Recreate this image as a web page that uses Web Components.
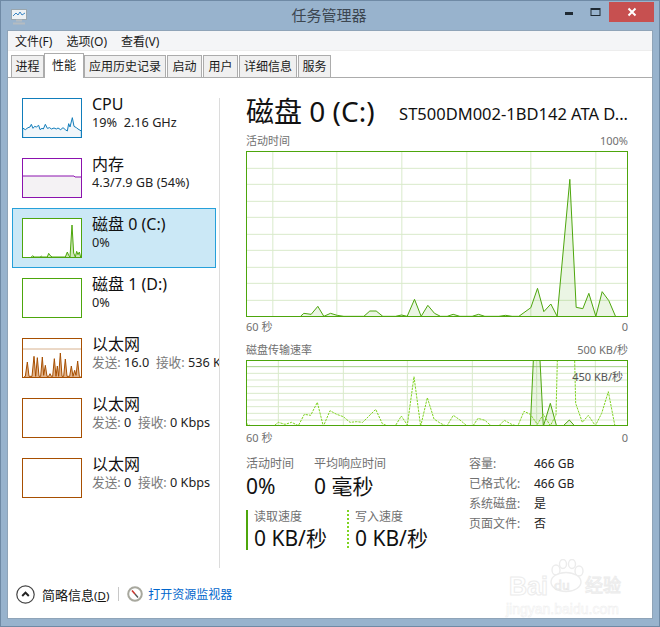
<!DOCTYPE html>
<html lang="zh">
<head>
<meta charset="utf-8">
<title>任务管理器</title>
<style>
  html, body { margin: 0; padding: 0; }
  body { font-family: "Noto Sans", "Noto Sans CJK SC", sans-serif; }
</style>
</head>
<body>
<task-window>
  <span slot="title">任务管理器</span>

  <menu-bar>
    <span>文件(F)</span>
    <span>选项(O)</span>
    <span>查看(V)</span>
  </menu-bar>

  <tab-strip>
    <tab-item w="33">进程</tab-item>
    <tab-item w="40" active>性能</tab-item>
    <tab-item w="82">应用历史记录</tab-item>
    <tab-item w="35">启动</tab-item>
    <tab-item w="35">用户</tab-item>
    <tab-item w="58">详细信息</tab-item>
    <tab-item w="33">服务</tab-item>
  </tab-strip>

  <perf-layout>
    <perf-item slot="side" color="#117dbb" fill="#f1f6fa" vb="12 13 180 120"
      points="14,130 14,103 22,108 30,102 36,100 40,92 45,104 50,98 55,100 62,95 66,108 72,104 76,106 82,92 88,104 95,102 100,106 108,103 115,106 120,103 128,108 135,102 142,108 148,112 152,90 156,100 163,72 168,98 175,102 180,106 190,112 190,130">
      <span slot="name">CPU</span>19%&nbsp; 2.16 GHz
    </perf-item>
    <perf-item slot="side" color="#8b12ae" fill="#f4f2f4" vb="0 0 180 120"
      points="0,120 0,54 156,54 159,57 180,57 180,120">
      <span slot="name">内存</span>4.3/7.9 GB (54%)
    </perf-item>
    <perf-item slot="side" selected color="#4da60c" fill="#cfe6b8" vb="0 0 180 120"
      points="28,117 32,113 36,117 55,117 58,114 62,117 76,117 80,106 84,112 90,117 130,117 136,102 140,112 144,117 150,21 155,105 160,117 164,100 168,110 172,102 176,117">
      <span slot="name">磁盘 0 (C:)</span>0%
    </perf-item>
    <perf-item slot="side" color="#4da60c">
      <span slot="name">磁盘 1 (D:)</span>0%
    </perf-item>
    <perf-item slot="side" color="#a74f01" fill="#e2b48c" vb="12 13 180 120" ref="33"
      points="18,130 22,128 28,85 33,128 42,128 48,68 53,128 58,72 63,128 68,128 73,70 77,125 82,95 87,128 92,128 96,120 100,128 104,128 109,75 114,128 118,97 122,128 127,58 132,128 137,128 142,76 147,128 155,128 160,97 165,128 170,110 174,125 179,82 184,128 188,130">
      <span slot="name">以太网</span><grey-text>发送:</grey-text> 16.0&nbsp; <grey-text>接收:</grey-text> 536 Kbps
    </perf-item>
    <perf-item slot="side" color="#a74f01">
      <span slot="name">以太网</span><grey-text>发送:</grey-text> 0&nbsp; <grey-text>接收:</grey-text> 0 Kbps
    </perf-item>
    <perf-item slot="side" color="#a74f01">
      <span slot="name">以太网</span><grey-text>发送:</grey-text> 0&nbsp; <grey-text>接收:</grey-text> 0 Kbps
    </perf-item>

    <disk-header slot="pane">
      <span slot="title">磁盘 0 (C:)</span>
      <span slot="model">ST500DM002-1BD142 ATA D...</span>
    </disk-header>

    <axis-row slot="pane" top="4"><span>活动时间</span><span>100%</span></axis-row>
    <line-graph slot="pane" h="166" vb="16.5 33 1146 498"
      grid-x="97 289 484 679 871 1066" grid-y="85 133 184 232 283 331 382 430 481"
      solid="180,529 190,520 212,523 232,499 250,529 270,520 290,526 310,529 370,529 388,513 407,513 427,529 465,529 483,525 500,529 522,478 542,529 562,496 582,520 600,529 620,529 638,523 658,529 695,529 714,523 733,529 775,529 795,526 815,529 835,529 871,503 891,445 910,515 931,492 950,529 988,118 1007,502 1027,506 1045,460 1066,529 1085,455 1105,482 1125,529"></line-graph>
    <axis-row slot="pane" top="3"><span>60 秒</span><span>0</span></axis-row>

    <axis-row slot="pane" top="9"><span>磁盘传输速率</span><span>500 KB/秒</span></axis-row>
    <line-graph slot="pane" h="66" vb="18 75 1146 198" ceiling="95"
      grid-x="115 310 502 697 890 1066" grid-y="115 135 155 175 195 215 235 255"
      solid="871,274 880,76 900,76 910,274 931,205 950,274 968,274 988,255 1005,274"
      dashed="18,265 35,274 100,274 115,262 135,268 155,262 175,272 193,238 212,241 232,202 250,274 270,227 290,238 310,245 330,262 350,260 368,262 407,223 427,266 445,274 465,274 484,243 502,270 522,125 542,274 562,188 582,252 600,264 620,274 640,241 660,255 680,272 698,274 714,250 735,256 755,274 775,274 793,256 815,268 833,274 852,229 871,238 892,268 910,238 931,272 948,240 952,76 1004,76 1007,205 1027,262 1045,241 1066,272 1085,235 1105,170 1125,274">
      <span slot="note">450 KB/秒</span>
    </line-graph>
    <axis-row slot="pane" top="5"><span>60 秒</span><span>0</span></axis-row>

    <disk-stats slot="pane">
      <stat-block slot="a" w="68" label="活动时间">0%</stat-block>
      <stat-block slot="a" label="平均响应时间">0 毫秒</stat-block>
      <stat-block slot="b" w="101" mark="solid" label="读取速度">0 KB/秒</stat-block>
      <stat-block slot="b" mark="dotted" label="写入速度">0 KB/秒</stat-block>
      <span slot="k">容量:</span><span slot="k">466 GB</span>
      <span slot="k">已格式化:</span><span slot="k">466 GB</span>
      <span slot="k">系统磁盘:</span><span slot="k">是</span>
      <span slot="k">页面文件:</span><span slot="k">否</span>
    </disk-stats>

    <task-footer slot="footer"></task-footer>
  </perf-layout>
</task-window>

<script>
function scaffold(html) {
  const t = document.createElement('template')
  t.innerHTML = html
  return t
}

const windowTemplate = scaffold(`
  <style>
    :host {
      display: flex;
      flex-direction: column;
      position: relative;
      box-sizing: border-box;
      width: 660px;
      height: 627px;
      overflow: hidden;
      background: #98b3cd;
      border: 1px solid #6f8aa5;
    }
    .bar { display: flex; align-items: flex-start; height: 30px; flex: none; }
    .icon { margin: 7px 0 0 9px; flex: none; }
    .title { flex: 1; text-align: center; font-size: 15px; line-height: 28px; color: #3c4650; padding-left: 66px; }
    .ctl { flex: none; display: flex; align-items: flex-start; margin-right: 5px; }
    .ctl svg { display: block; }
    .close { width: 45px; height: 20px; margin: 1px 0 0 7px; background: #c75050; display: flex; align-items: center; justify-content: center; }
    .client {
      flex: 1;
      min-height: 0;
      margin: 0 7px 8px 7px;
      background: #fff;
      box-shadow: 0 0 0 1px #8fa4b8;
      display: flex;
      flex-direction: column;
    }
    .mark { position: absolute; left: 504px; top: 558px; width: 124px; height: 58px; pointer-events: none; }
    .mark span { position: absolute; white-space: nowrap; font-family: "Liberation Sans", sans-serif; color: #fff; -webkit-text-stroke: 1px #ececec; }
    .mark svg { position: absolute; left: 42px; top: 0; }
    .bai { left: 4px; top: 12px; font-size: 25px; line-height: 30px; font-weight: 700; }
    .jy { left: 80px; top: 13px; font-size: 18px; line-height: 24px; font-family: "Noto Sans CJK SC", sans-serif !important; }
    .url { left: 1px; top: 42px; font-size: 14px; line-height: 16px; -webkit-text-stroke: .5px #eeeeee !important; }
  </style>
  <div class="bar">
    <svg class="icon" width="18" height="17" viewBox="0 0 18 17">
      <rect x="1.5" y="1.5" width="15" height="10" fill="#eef2f5" stroke="#9aa6ad"/>
      <path d="M3 8 L6 5 L8 7 L10 4 L12 7 L15 5" fill="none" stroke="#3a86c4"/>
      <path d="M6 12.5h6M3 15.5h12" stroke="#b4bcc2" stroke-width="2"/>
    </svg>
    <div class="title"><slot name="title"></slot></div>
    <div class="ctl">
      <svg width="10" height="20" viewBox="0 0 10 20" style="margin-right:16px"><rect x="1" y="11" width="8" height="3" fill="#1f2a33"/></svg>
      <svg width="12" height="20" viewBox="0 0 12 20"><rect x="1" y="7.5" width="9" height="7" fill="none" stroke="#1f2a33"/><rect x="1" y="7" width="9" height="2" fill="#1f2a33"/></svg>
      <div class="close"><svg width="10" height="10" viewBox="0 0 10 10"><path d="M1.5 1.5 L8.5 8.5 M8.5 1.5 L1.5 8.5" stroke="#fff" stroke-width="2"/></svg></div>
    </div>
  </div>
  <div class="client"><slot></slot></div>
  <div class="mark">
    <span class="bai">Bai</span>
    <svg width="38" height="34" viewBox="0 0 38 34" fill="#fff" stroke="#ececec" stroke-width="1.4">
      <ellipse cx="9" cy="11" rx="4" ry="5"/><ellipse cx="16" cy="5" rx="3.5" ry="4.5"/><ellipse cx="25" cy="5" rx="3.5" ry="4.5"/><ellipse cx="32" cy="12" rx="4" ry="5"/>
      <ellipse cx="19" cy="23" rx="15" ry="9.5"/>
    </svg>
    <span class="jy" style="left:49px;top:18px;font-size:13px;line-height:16px;-webkit-text-stroke:.7px #e6e6e6">du</span>
    <span class="jy">经验</span>
    <span class="url">jingyan.baidu.com</span>
  </div>
`)

class TaskWindow extends HTMLElement {
  constructor() {
    super()
    this.attachShadow({ mode: 'open' })
    this.shadowRoot.appendChild(windowTemplate.content.cloneNode(true))
  }
}

const menuTemplate = scaffold(`
  <style>
    :host {
      display: flex;
      flex: none;
      height: 19px;
      padding-left: 7px;
      gap: 14px;
      background: #f4f5f7;
      border-bottom: 1px solid #ededed;
      font-size: 12px;
      line-height: 21px;
      color: #1a1a1a;
    }
  </style>
  <slot></slot>
`)

class MenuBar extends HTMLElement {
  constructor() {
    super()
    this.attachShadow({ mode: 'open' })
    this.shadowRoot.appendChild(menuTemplate.content.cloneNode(true))
  }
}

const stripTemplate = scaffold(`
  <style>
    :host {
      display: flex;
      align-items: flex-end;
      gap: 1px;
      flex: none;
      height: 26px;
      padding-left: 3px;
      border-bottom: 1px solid #acacac;
    }
  </style>
  <slot></slot>
`)

class TabStrip extends HTMLElement {
  constructor() {
    super()
    this.attachShadow({ mode: 'open' })
    this.shadowRoot.appendChild(stripTemplate.content.cloneNode(true))
  }
}

const tabTemplate = scaffold(`
  <style>
    :host {
      display: block;
      box-sizing: border-box;
      height: 22px;
      border: 1px solid #acacac;
      border-bottom: 0;
      background: #f0f0f0;
      text-align: center;
      font-size: 12px;
      line-height: 22px;
      color: #1a1a1a;
    }
    :host([active]) {
      height: 25px;
      margin: 0 -1px -1px -1px;
      line-height: 23px;
      background: #fff;
      position: relative;
    }
  </style>
  <slot></slot>
`)

class TabItem extends HTMLElement {
  constructor() {
    super()
    this.attachShadow({ mode: 'open' })
    this.shadowRoot.appendChild(tabTemplate.content.cloneNode(true))
  }
  connectedCallback() {
    this.style.width = this.getAttribute('w') + 'px'
  }
}

const layoutTemplate = scaffold(`
  <style>
    :host { display: flex; flex-direction: column; flex: 1; min-height: 0; }
    .main { display: flex; flex: none; height: 492px; }
    .side { width: 211px; flex: none; padding: 10px 0 0 4px; box-sizing: border-box; overflow: hidden; }
    .rule { width: 1px; height: 470px; margin-top: 20px; background: #dcdcdc; flex: none; }
    .pane { width: 382px; margin-left: 26px; flex: none; }
  </style>
  <div class="main">
    <div class="side"><slot name="side"></slot></div>
    <div class="rule"></div>
    <div class="pane"><slot name="pane"></slot></div>
  </div>
  <slot name="footer"></slot>
`)

class PerfLayout extends HTMLElement {
  constructor() {
    super()
    this.attachShadow({ mode: 'open' })
    this.shadowRoot.appendChild(layoutTemplate.content.cloneNode(true))
  }
}

const itemTemplate = scaffold(`
  <style>
    :host {
      display: flex;
      box-sizing: border-box;
      width: 204px;
      height: 60px;
      padding: 9px 0 0 9px;
      border: 1px solid transparent;
      white-space: nowrap;
    }
    :host([selected]) { background: #cbe8f6; border-color: #26a0da; }
    svg { display: block; width: 60px; height: 40px; flex: none; background: #fff; }
    .text { margin-left: 10px; margin-top: -4px; font-size: 12.7px; line-height: 15px; color: #222; }
    .name { font-size: 16px; line-height: 20px; color: #111; margin-bottom: 1px; }
  </style>
  <svg preserveAspectRatio="none"></svg>
  <div class="text">
    <div class="name"><slot name="name"></slot></div>
    <slot></slot>
  </div>
`)

class PerfItem extends HTMLElement {
  constructor() {
    super()
    this.attachShadow({ mode: 'open' })
    this.shadowRoot.appendChild(itemTemplate.content.cloneNode(true))
  }
  connectedCallback() {
    const svg = this.shadowRoot.querySelector('svg')
    const color = this.getAttribute('color')
    const vb = this.getAttribute('vb') || '0 0 180 120'
    const pts = this.getAttribute('points')
    svg.setAttribute('viewBox', vb)
    svg.style.outline = '1px solid ' + color
    svg.style.outlineOffset = '-1px'
    let inner = ''
    const ref = this.getAttribute('ref')
    if (ref) inner += `<path d="M0 ${+ref + 13} H200" stroke="#d8b28f" stroke-width="3"/>`
    if (pts) {
      const fill = this.getAttribute('fill')
      const xs = pts.split(' ')
      const first = xs[0].split(',')
      const last = xs[xs.length - 1].split(',')
      const bottom = Math.max(+first[1], +last[1])
      inner += `<polygon points="${pts} ${last[0]},${bottom} ${first[0]},${bottom}" fill="${fill}"/>`
      inner += `<polyline points="${pts}" fill="none" stroke="${color}" stroke-width="3"/>`
    }
    svg.innerHTML = inner
  }
}

const greyTemplate = scaffold(`
  <style>:host { display: inline; color: #7a7a7a; }</style>
  <slot></slot>
`)

class GreyText extends HTMLElement {
  constructor() {
    super()
    this.attachShadow({ mode: 'open' })
    this.shadowRoot.appendChild(greyTemplate.content.cloneNode(true))
  }
}

const headerTemplate = scaffold(`
  <style>
    :host {
      display: flex;
      justify-content: space-between;
      align-items: flex-start;
      box-sizing: border-box;
      height: 52px;
      padding-top: 13px;
      white-space: nowrap;
      color: #111;
    }
    .t { font-size: 28px; line-height: 40px; }
    .m { font-size: 16.5px; line-height: 24px; margin-top: 11px; }
  </style>
  <div class="t"><slot name="title"></slot></div>
  <div class="m"><slot name="model"></slot></div>
`)

class DiskHeader extends HTMLElement {
  constructor() {
    super()
    this.attachShadow({ mode: 'open' })
    this.shadowRoot.appendChild(headerTemplate.content.cloneNode(true))
  }
}

const axisTemplate = scaffold(`
  <style>
    :host {
      display: flex;
      justify-content: space-between;
      height: 14px;
      font-size: 11px;
      line-height: 14px;
      color: #707070;
      white-space: nowrap;
    }
  </style>
  <slot></slot>
`)

class AxisRow extends HTMLElement {
  constructor() {
    super()
    this.attachShadow({ mode: 'open' })
    this.shadowRoot.appendChild(axisTemplate.content.cloneNode(true))
  }
  connectedCallback() {
    this.style.marginTop = this.getAttribute('top') + 'px'
  }
}

const graphTemplate = scaffold(`
  <style>
    :host { display: block; position: relative; margin-top: 3px; }
    svg { display: block; width: 100%; height: 100%; outline: 1px solid #4da60c; outline-offset: -1px; }
    ::slotted([slot="note"]) { position: absolute; right: 5px; top: 9px; font-size: 11px; line-height: 16px; color: #555; }
  </style>
  <svg preserveAspectRatio="none"></svg>
  <slot name="note"></slot>
`)

class LineGraph extends HTMLElement {
  constructor() {
    super()
    this.attachShadow({ mode: 'open' })
    this.shadowRoot.appendChild(graphTemplate.content.cloneNode(true))
  }
  connectedCallback() {
    const vb = this.getAttribute('vb')
    const [x0, y0, w, h] = vb.split(' ').map(Number)
    const svg = this.shadowRoot.querySelector('svg')
    this.style.height = this.getAttribute('h') + 'px'
    svg.setAttribute('viewBox', vb)
    let d = ''
    for (const x of this.getAttribute('grid-x').split(' ')) d += `M${x} ${y0}V${y0 + h}`
    for (const y of this.getAttribute('grid-y').split(' ')) d += `M${x0} ${y}H${x0 + w}`
    let inner = `<path d="${d}" stroke="#d9eacb" stroke-width="3" fill="none"/>`
    const ceiling = this.getAttribute('ceiling')
    if (ceiling) inner += `<path d="M${x0} ${ceiling}H${x0 + w}" stroke="#a6d189" stroke-width="3"/>`
    const solid = this.getAttribute('solid')
    const bottom = y0 + h - 3
    const pts = solid.split(' ')
    const firstX = pts[0].split(',')[0]
    const lastX = pts[pts.length - 1].split(',')[0]
    inner += `<polygon points="${firstX},${bottom} ${solid} ${lastX},${bottom}" fill="#4da60c" fill-opacity=".11"/>`
    inner += `<polyline points="${solid}" fill="none" stroke="#4da60c" stroke-width="3"/>`
    const dashed = this.getAttribute('dashed')
    if (dashed) inner += `<polyline points="${dashed}" fill="none" stroke="#7fd421" stroke-width="3" stroke-dasharray="7 3"/>`
    svg.innerHTML = inner
  }
}

const statsTemplate = scaffold(`
  <style>
    :host { display: flex; margin-top: 12px; white-space: nowrap; }
    .left { width: 223px; flex: none; }
    .row { display: flex; }
    .row.b { margin-top: 6px; }
    .info {
      display: grid;
      grid-template-columns: 65px auto;
      grid-auto-rows: 20px;
      font-size: 12px;
      line-height: 20px;
      color: #222;
      align-content: start;
      margin-top: -3px;
    }
    ::slotted([slot="k"]:nth-of-type(odd)) { color: #707070; }
  </style>
  <div class="left">
    <div class="row"><slot name="a"></slot></div>
    <div class="row b"><slot name="b"></slot></div>
  </div>
  <div class="info"><slot name="k"></slot></div>
`)

class DiskStats extends HTMLElement {
  constructor() {
    super()
    this.attachShadow({ mode: 'open' })
    this.shadowRoot.appendChild(statsTemplate.content.cloneNode(true))
  }
}

const statTemplate = scaffold(`
  <style>
    :host { display: block; box-sizing: border-box; height: 44px; flex: none; }
    :host([mark]) { padding-left: 8px; height: 40px; margin-top: 3px; background-size: 2px 100%; background-repeat: no-repeat; }
    :host([mark="solid"]) { background-image: linear-gradient(#4da60c, #4da60c); }
    :host([mark="dotted"]) { background-image: repeating-linear-gradient(#7fd421 0 2px, transparent 2px 4px); }
    .l { font-size: 12px; line-height: 14px; color: #707070; }
    .v { font-size: 21px; line-height: 28px; color: #111; margin-top: 1px; }
    :host([mark]) .v { margin-top: 0; }
  </style>
  <div class="l"></div>
  <div class="v"><slot></slot></div>
`)

class StatBlock extends HTMLElement {
  constructor() {
    super()
    this.attachShadow({ mode: 'open' })
    this.shadowRoot.appendChild(statTemplate.content.cloneNode(true))
  }
  connectedCallback() {
    this.shadowRoot.querySelector('.l').textContent = this.getAttribute('label')
    if (this.getAttribute('w')) this.style.width = this.getAttribute('w') + 'px'
  }
}

const footerTemplate = scaffold(`
  <style>
    :host {
      display: flex;
      align-items: center;
      height: 48px;
      padding-left: 8px;
      flex: none;
      white-space: nowrap;
    }
    svg { display: block; flex: none; }
    .less { margin-left: 7px; font-size: 13px; color: #111; }
    .less small { font-size: 11.5px; }
    .sep { width: 1px; height: 14px; margin: 0 8px 0 9px; background: #c8c8c8; flex: none; }
    a { margin-left: 5px; font-size: 12px; color: #0066cc; text-decoration: none; }
  </style>
  <svg width="19" height="19" viewBox="0 0 19 19">
    <circle cx="9.5" cy="9.5" r="8.7" fill="#fff" stroke="#444" stroke-width="1.2"/>
    <path d="M6.2 11 L9.5 7.6 L12.8 11" fill="none" stroke="#222" stroke-width="2"/>
  </svg>
  <span class="less">简略信息<small>(<u>D</u>)</small></span>
  <span class="sep"></span>
  <svg width="16" height="16" viewBox="0 0 16 16">
    <circle cx="8" cy="8" r="6.8" fill="#fff" stroke="#a8a89e" stroke-width="2"/>
    <path d="M5 4.5 L8 8" stroke="#c8352d" stroke-width="1.6"/>
    <path d="M8 8 L11 11.5" stroke="#555" stroke-width="1.4"/>
  </svg>
  <a href="#">打开资源监视器</a>
`)

class TaskFooter extends HTMLElement {
  constructor() {
    super()
    this.attachShadow({ mode: 'open' })
    this.shadowRoot.appendChild(footerTemplate.content.cloneNode(true))
  }
}

customElements.define('task-window', TaskWindow)
customElements.define('menu-bar', MenuBar)
customElements.define('tab-strip', TabStrip)
customElements.define('tab-item', TabItem)
customElements.define('perf-layout', PerfLayout)
customElements.define('perf-item', PerfItem)
customElements.define('grey-text', GreyText)
customElements.define('disk-header', DiskHeader)
customElements.define('axis-row', AxisRow)
customElements.define('line-graph', LineGraph)
customElements.define('disk-stats', DiskStats)
customElements.define('stat-block', StatBlock)
customElements.define('task-footer', TaskFooter)
</script>
</body>
</html>
